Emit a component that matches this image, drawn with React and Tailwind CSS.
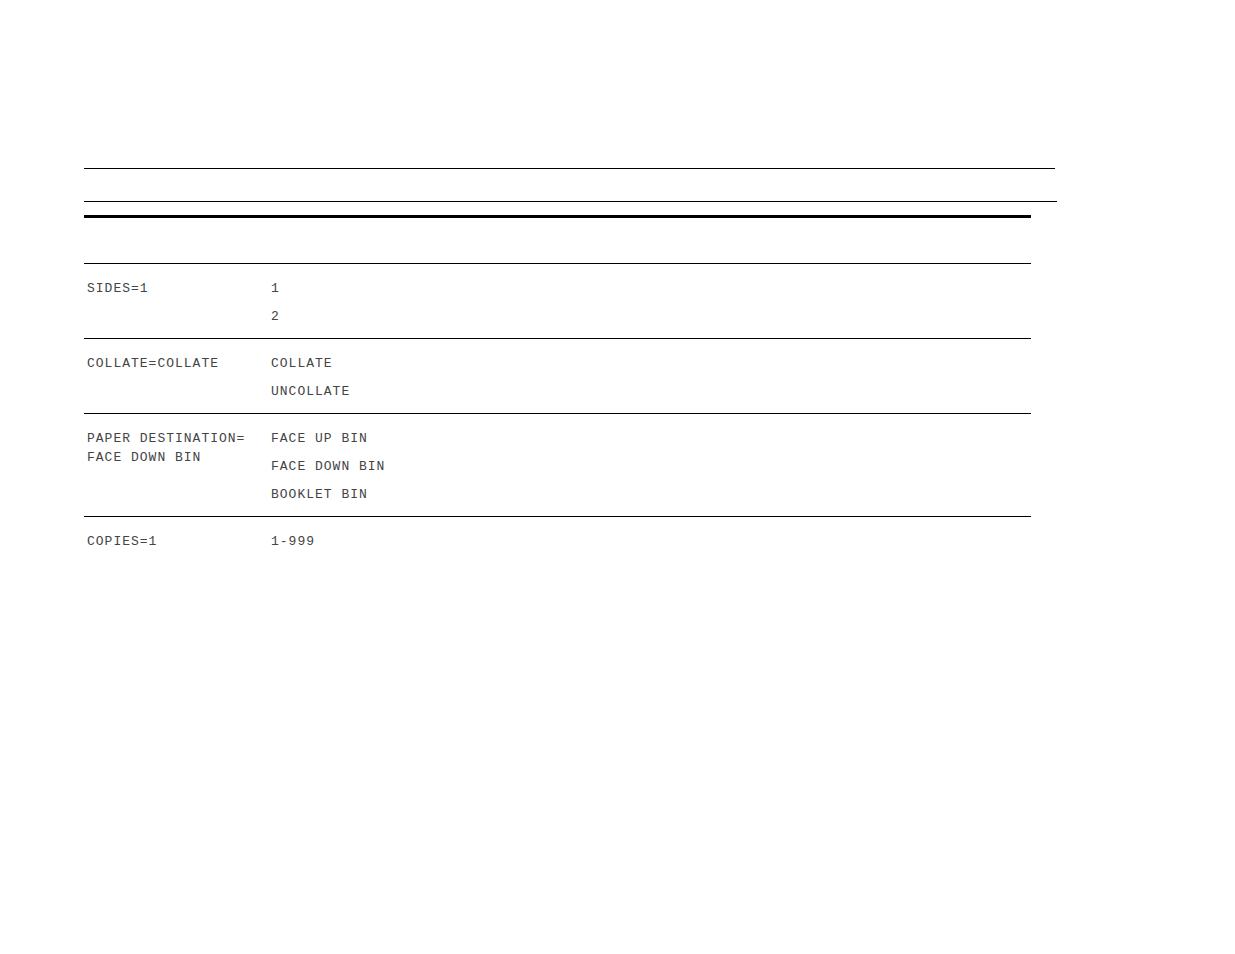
export default function App() {
  const rows = [
    { k: ["SIDES=1"], v: ["1", "2"] },
    { k: ["COLLATE=COLLATE"], v: ["COLLATE", "UNCOLLATE"] },
    { k: ["PAPER DESTINATION=", "FACE DOWN BIN"], v: ["FACE UP BIN", "FACE DOWN BIN", "BOOKLET BIN"] },
    { k: ["COPIES=1"], v: ["1-999"] },
  ];
  return (
    <div className="w-[1235px] h-[954px] bg-white relative" style={{ fontFamily: '"Liberation Mono", "DejaVu Sans Mono", monospace' }}>
      <div className="pt-[168px] pl-[84px]">
        <div className="w-[971px] h-px bg-black" />
        <div className="h-[32px]" />
        <div className="w-[973px] h-px bg-black" />
        <div className="h-[13px]" />
        <div className="w-[947px] h-[3px] bg-black" />
        <div className="h-[45px]" />
        <div className="w-[947px]">
          {rows.map((r, i) => (
            <div key={i} className="border-t border-black flex pt-[15px] pb-[12px] text-[13px] leading-[19px] tracking-[1px] text-[#444444]">
              <div className="w-[187px] pl-[3px] flex flex-col">
                {r.k.map((t, j) => (
                  <div key={j}>{t}</div>
                ))}
              </div>
              <div className="flex flex-col gap-[9px]">
                {r.v.map((t, j) => (
                  <div key={j}>{t}</div>
                ))}
              </div>
            </div>
          ))}
        </div>
      </div>
    </div>
  );
}
